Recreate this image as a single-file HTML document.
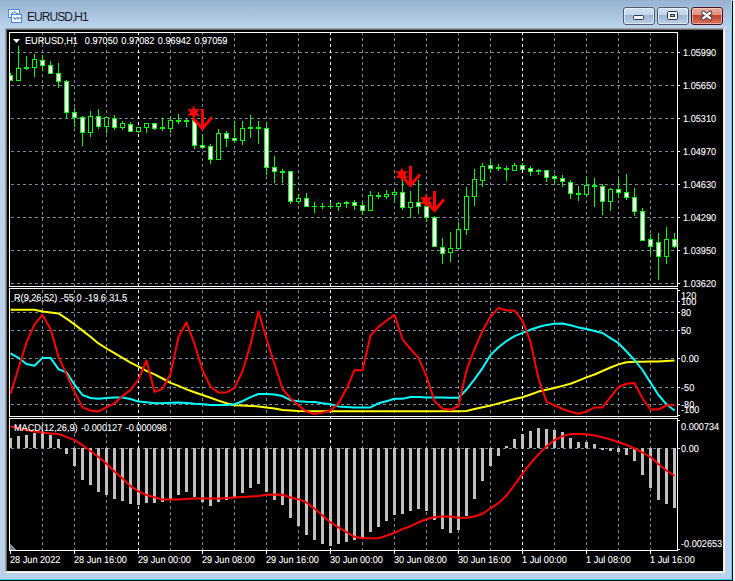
<!DOCTYPE html>
<html><head><meta charset="utf-8"><style>
html,body{margin:0;padding:0;}
body{width:735px;height:581px;overflow:hidden;position:relative;background:#b9d1ea;font-family:"Liberation Sans",sans-serif;}
.abs{position:absolute;}
.ch{position:absolute;left:0;top:0;}
.t{position:absolute;color:#fff;font-size:10px;line-height:10px;height:10px;margin-top:-3px;white-space:nowrap;word-spacing:1px;-webkit-text-stroke:0.1px #fff;transform:scale(0.915,1);transform-origin:0 8px;text-rendering:geometricPrecision;}
.ts{word-spacing:0;}
.title{position:absolute;left:27px;top:10px;font-size:12px;line-height:14px;color:#1a1a2a;letter-spacing:-0.95px;white-space:nowrap;}
</style></head><body>
<div class="abs" style="left:0;top:0;width:735px;height:28px;background:linear-gradient(#97b2d1,#bcd5ee);"></div>
<div class="abs" style="left:5px;top:28px;width:720px;height:545px;background:#ffffff;"></div>
<div class="abs" style="left:5px;top:28px;width:719px;height:544px;background:#a0a0a0;"></div>
<div class="abs" style="left:6px;top:29px;width:718px;height:543px;background:#e3e3e3;"></div>
<div class="abs" style="left:6px;top:29px;width:717px;height:542px;background:#696969;"></div>
<div class="abs" style="left:7px;top:30px;width:716px;height:541px;background:#000;"></div>
<div class="abs" style="left:730px;top:28px;width:1px;height:551px;background:#c4cce8;"></div>
<div class="abs" style="left:731px;top:0;width:1px;height:580px;background:linear-gradient(#a8e0f5,#48d8ff 30px,#48d8ff);"></div>
<div class="abs" style="left:732px;top:1px;width:1px;height:580px;background:#080808;"></div>
<div class="abs" style="left:733px;top:0;width:2px;height:581px;background:#f4f4f4;"></div>
<div class="abs" style="left:0;top:579px;width:732px;height:1px;background:#30d8f0;"></div>
<div class="abs" style="left:0;top:580px;width:733px;height:1px;background:#101010;"></div>
<svg class="ch" width="735" height="581" viewBox="0 0 735 581" shape-rendering="crispEdges"><defs>
<clipPath id="cg"><rect x="10" y="33" width="667" height="253"/><rect x="10" y="289" width="667" height="127"/><rect x="10" y="419" width="667" height="131"/>
<rect x="10" y="286" width="667" height="3"/><rect x="10" y="416" width="667" height="3"/></clipPath>
<clipPath id="cm"><rect x="10" y="33" width="667" height="253"/></clipPath>
<clipPath id="c1"><rect x="10" y="289" width="667" height="127"/></clipPath>
<clipPath id="c2"><rect x="10" y="419" width="667" height="131"/></clipPath>
</defs><g clip-path="url(#cg)"><line x1="11" y1="52.5" x2="677" y2="52.5" stroke="#778899" stroke-dasharray="3 3"/><line x1="11" y1="85.5" x2="677" y2="85.5" stroke="#778899" stroke-dasharray="3 3"/><line x1="11" y1="118.5" x2="677" y2="118.5" stroke="#778899" stroke-dasharray="3 3"/><line x1="11" y1="151.5" x2="677" y2="151.5" stroke="#778899" stroke-dasharray="3 3"/><line x1="11" y1="184.5" x2="677" y2="184.5" stroke="#778899" stroke-dasharray="3 3"/><line x1="11" y1="217.5" x2="677" y2="217.5" stroke="#778899" stroke-dasharray="3 3"/><line x1="11" y1="250.5" x2="677" y2="250.5" stroke="#778899" stroke-dasharray="3 3"/><line x1="11" y1="283.5" x2="677" y2="283.5" stroke="#778899" stroke-dasharray="3 3"/><line x1="11" y1="301.5" x2="677" y2="301.5" stroke="#778899" stroke-dasharray="3 3"/><line x1="11" y1="312.5" x2="677" y2="312.5" stroke="#778899" stroke-dasharray="3 3"/><line x1="11" y1="330.5" x2="677" y2="330.5" stroke="#778899" stroke-dasharray="3 3"/><line x1="11" y1="358.5" x2="677" y2="358.5" stroke="#778899" stroke-dasharray="3 3"/><line x1="11" y1="387.5" x2="677" y2="387.5" stroke="#778899" stroke-dasharray="3 3"/><line x1="11" y1="404.5" x2="677" y2="404.5" stroke="#778899" stroke-dasharray="3 3"/><line x1="11" y1="448.5" x2="677" y2="448.5" stroke="#778899" stroke-dasharray="3 3"/><line x1="42.5" y1="8" x2="42.5" y2="551" stroke="#778899" stroke-dasharray="3 3"/><line x1="74.5" y1="8" x2="74.5" y2="551" stroke="#778899" stroke-dasharray="3 3"/><line x1="106.5" y1="8" x2="106.5" y2="551" stroke="#778899" stroke-dasharray="3 3"/><line x1="138.5" y1="8" x2="138.5" y2="551" stroke="#ffffff" stroke-dasharray="3 3"/><line x1="170.5" y1="8" x2="170.5" y2="551" stroke="#778899" stroke-dasharray="3 3"/><line x1="202.5" y1="8" x2="202.5" y2="551" stroke="#778899" stroke-dasharray="3 3"/><line x1="234.5" y1="8" x2="234.5" y2="551" stroke="#778899" stroke-dasharray="3 3"/><line x1="266.5" y1="8" x2="266.5" y2="551" stroke="#778899" stroke-dasharray="3 3"/><line x1="298.5" y1="8" x2="298.5" y2="551" stroke="#778899" stroke-dasharray="3 3"/><line x1="330.5" y1="8" x2="330.5" y2="551" stroke="#ffffff" stroke-dasharray="3 3"/><line x1="362.5" y1="8" x2="362.5" y2="551" stroke="#778899" stroke-dasharray="3 3"/><line x1="394.5" y1="8" x2="394.5" y2="551" stroke="#778899" stroke-dasharray="3 3"/><line x1="426.5" y1="8" x2="426.5" y2="551" stroke="#778899" stroke-dasharray="3 3"/><line x1="458.5" y1="8" x2="458.5" y2="551" stroke="#778899" stroke-dasharray="3 3"/><line x1="490.5" y1="8" x2="490.5" y2="551" stroke="#778899" stroke-dasharray="3 3"/><line x1="522.5" y1="8" x2="522.5" y2="551" stroke="#ffffff" stroke-dasharray="3 3"/><line x1="554.5" y1="8" x2="554.5" y2="551" stroke="#778899" stroke-dasharray="3 3"/><line x1="586.5" y1="8" x2="586.5" y2="551" stroke="#778899" stroke-dasharray="3 3"/><line x1="618.5" y1="8" x2="618.5" y2="551" stroke="#778899" stroke-dasharray="3 3"/><line x1="650.5" y1="8" x2="650.5" y2="551" stroke="#778899" stroke-dasharray="3 3"/></g><g clip-path="url(#cm)"><rect x="10" y="73" width="1" height="8" fill="#00ff00"/><rect x="8" y="75" width="5" height="6" fill="#00ff00"/><rect x="9" y="76" width="3" height="4" fill="#ffffff"/><rect x="18" y="46" width="1" height="35" fill="#00ff00"/><rect x="16" y="68" width="5" height="13" fill="#00ff00"/><rect x="17" y="69" width="3" height="11" fill="#000000"/><rect x="26" y="56" width="1" height="14" fill="#00ff00"/><rect x="24" y="67" width="5" height="2" fill="#00ff00"/><rect x="34" y="54" width="1" height="23" fill="#00ff00"/><rect x="32" y="59" width="5" height="9" fill="#00ff00"/><rect x="33" y="60" width="3" height="7" fill="#000000"/><rect x="42" y="55" width="1" height="16" fill="#00ff00"/><rect x="40" y="60" width="5" height="6" fill="#00ff00"/><rect x="41" y="61" width="3" height="4" fill="#ffffff"/><rect x="50" y="61" width="1" height="13" fill="#00ff00"/><rect x="48" y="65" width="5" height="9" fill="#00ff00"/><rect x="49" y="66" width="3" height="7" fill="#ffffff"/><rect x="58" y="63" width="1" height="25" fill="#00ff00"/><rect x="56" y="73" width="5" height="9" fill="#00ff00"/><rect x="57" y="74" width="3" height="7" fill="#ffffff"/><rect x="66" y="80" width="1" height="39" fill="#00ff00"/><rect x="64" y="81" width="5" height="32" fill="#00ff00"/><rect x="65" y="82" width="3" height="30" fill="#ffffff"/><rect x="74" y="108" width="1" height="19" fill="#00ff00"/><rect x="72" y="112" width="5" height="6" fill="#00ff00"/><rect x="73" y="113" width="3" height="4" fill="#ffffff"/><rect x="82" y="116" width="1" height="30" fill="#00ff00"/><rect x="80" y="117" width="5" height="16" fill="#00ff00"/><rect x="81" y="118" width="3" height="14" fill="#ffffff"/><rect x="90" y="111" width="1" height="26" fill="#00ff00"/><rect x="88" y="116" width="5" height="17" fill="#00ff00"/><rect x="89" y="117" width="3" height="15" fill="#000000"/><rect x="98" y="109" width="1" height="20" fill="#00ff00"/><rect x="96" y="116" width="5" height="11" fill="#00ff00"/><rect x="97" y="117" width="3" height="9" fill="#ffffff"/><rect x="106" y="117" width="1" height="16" fill="#00ff00"/><rect x="104" y="117" width="5" height="10" fill="#00ff00"/><rect x="105" y="118" width="3" height="8" fill="#000000"/><rect x="114" y="115" width="1" height="15" fill="#00ff00"/><rect x="112" y="118" width="5" height="10" fill="#00ff00"/><rect x="113" y="119" width="3" height="8" fill="#ffffff"/><rect x="122" y="121" width="1" height="9" fill="#00ff00"/><rect x="120" y="123" width="5" height="5" fill="#00ff00"/><rect x="121" y="124" width="3" height="3" fill="#000000"/><rect x="130" y="122" width="1" height="10" fill="#00ff00"/><rect x="128" y="124" width="5" height="8" fill="#00ff00"/><rect x="129" y="125" width="3" height="6" fill="#ffffff"/><rect x="138" y="127" width="1" height="6" fill="#00ff00"/><rect x="136" y="127" width="5" height="5" fill="#00ff00"/><rect x="137" y="128" width="3" height="3" fill="#000000"/><rect x="146" y="123" width="1" height="10" fill="#00ff00"/><rect x="144" y="123" width="5" height="5" fill="#00ff00"/><rect x="145" y="124" width="3" height="3" fill="#000000"/><rect x="154" y="123" width="1" height="7" fill="#00ff00"/><rect x="152" y="123" width="5" height="6" fill="#00ff00"/><rect x="153" y="124" width="3" height="4" fill="#ffffff"/><rect x="162" y="118" width="1" height="13" fill="#00ff00"/><rect x="160" y="127" width="5" height="2" fill="#00ff00"/><rect x="170" y="116" width="1" height="17" fill="#00ff00"/><rect x="168" y="120" width="5" height="9" fill="#00ff00"/><rect x="169" y="121" width="3" height="7" fill="#000000"/><rect x="178" y="114" width="1" height="10" fill="#00ff00"/><rect x="176" y="120" width="5" height="2" fill="#00ff00"/><rect x="186" y="119" width="1" height="8" fill="#00ff00"/><rect x="184" y="120" width="5" height="2" fill="#00ff00"/><rect x="194" y="118" width="1" height="31" fill="#00ff00"/><rect x="192" y="120" width="5" height="26" fill="#00ff00"/><rect x="193" y="121" width="3" height="24" fill="#ffffff"/><rect x="202" y="134" width="1" height="15" fill="#00ff00"/><rect x="200" y="145" width="5" height="3" fill="#00ff00"/><rect x="201" y="146" width="3" height="1" fill="#ffffff"/><rect x="210" y="144" width="1" height="20" fill="#00ff00"/><rect x="208" y="146" width="5" height="14" fill="#00ff00"/><rect x="209" y="147" width="3" height="12" fill="#ffffff"/><rect x="218" y="129" width="1" height="31" fill="#00ff00"/><rect x="216" y="133" width="5" height="27" fill="#00ff00"/><rect x="217" y="134" width="3" height="25" fill="#000000"/><rect x="226" y="131" width="1" height="16" fill="#00ff00"/><rect x="224" y="133" width="5" height="6" fill="#00ff00"/><rect x="225" y="134" width="3" height="4" fill="#ffffff"/><rect x="234" y="121" width="1" height="22" fill="#00ff00"/><rect x="232" y="138" width="5" height="3" fill="#00ff00"/><rect x="233" y="139" width="3" height="1" fill="#ffffff"/><rect x="242" y="121" width="1" height="24" fill="#00ff00"/><rect x="240" y="128" width="5" height="13" fill="#00ff00"/><rect x="241" y="129" width="3" height="11" fill="#000000"/><rect x="250" y="115" width="1" height="23" fill="#00ff00"/><rect x="248" y="127" width="5" height="2" fill="#00ff00"/><rect x="258" y="121" width="1" height="23" fill="#00ff00"/><rect x="256" y="127" width="5" height="2" fill="#00ff00"/><rect x="266" y="122" width="1" height="53" fill="#00ff00"/><rect x="264" y="128" width="5" height="40" fill="#00ff00"/><rect x="265" y="129" width="3" height="38" fill="#ffffff"/><rect x="274" y="156" width="1" height="27" fill="#00ff00"/><rect x="272" y="167" width="5" height="5" fill="#00ff00"/><rect x="273" y="168" width="3" height="3" fill="#ffffff"/><rect x="282" y="169" width="1" height="14" fill="#00ff00"/><rect x="280" y="171" width="5" height="2" fill="#00ff00"/><rect x="290" y="171" width="1" height="33" fill="#00ff00"/><rect x="288" y="171" width="5" height="31" fill="#00ff00"/><rect x="289" y="172" width="3" height="29" fill="#ffffff"/><rect x="298" y="194" width="1" height="10" fill="#00ff00"/><rect x="296" y="198" width="5" height="4" fill="#00ff00"/><rect x="297" y="199" width="3" height="2" fill="#000000"/><rect x="306" y="193" width="1" height="14" fill="#00ff00"/><rect x="304" y="198" width="5" height="9" fill="#00ff00"/><rect x="305" y="199" width="3" height="7" fill="#ffffff"/><rect x="314" y="202" width="1" height="11" fill="#00ff00"/><rect x="312" y="206" width="5" height="1" fill="#00ff00"/><rect x="322" y="203" width="1" height="6" fill="#00ff00"/><rect x="320" y="206" width="5" height="1" fill="#00ff00"/><rect x="330" y="202" width="1" height="7" fill="#00ff00"/><rect x="328" y="206" width="5" height="1" fill="#00ff00"/><rect x="338" y="202" width="1" height="9" fill="#00ff00"/><rect x="336" y="203" width="5" height="4" fill="#00ff00"/><rect x="337" y="204" width="3" height="2" fill="#000000"/><rect x="346" y="201" width="1" height="7" fill="#00ff00"/><rect x="344" y="202" width="5" height="2" fill="#00ff00"/><rect x="354" y="200" width="1" height="10" fill="#00ff00"/><rect x="352" y="202" width="5" height="4" fill="#00ff00"/><rect x="353" y="203" width="3" height="2" fill="#ffffff"/><rect x="362" y="202" width="1" height="13" fill="#00ff00"/><rect x="360" y="205" width="5" height="6" fill="#00ff00"/><rect x="361" y="206" width="3" height="4" fill="#ffffff"/><rect x="370" y="191" width="1" height="20" fill="#00ff00"/><rect x="368" y="195" width="5" height="16" fill="#00ff00"/><rect x="369" y="196" width="3" height="14" fill="#000000"/><rect x="378" y="192" width="1" height="7" fill="#00ff00"/><rect x="376" y="195" width="5" height="2" fill="#00ff00"/><rect x="386" y="190" width="1" height="9" fill="#00ff00"/><rect x="384" y="194" width="5" height="3" fill="#00ff00"/><rect x="385" y="195" width="3" height="1" fill="#000000"/><rect x="394" y="190" width="1" height="12" fill="#00ff00"/><rect x="392" y="192" width="5" height="3" fill="#00ff00"/><rect x="393" y="193" width="3" height="1" fill="#000000"/><rect x="402" y="180" width="1" height="30" fill="#00ff00"/><rect x="400" y="192" width="5" height="16" fill="#00ff00"/><rect x="401" y="193" width="3" height="14" fill="#ffffff"/><rect x="410" y="191" width="1" height="27" fill="#00ff00"/><rect x="408" y="202" width="5" height="6" fill="#00ff00"/><rect x="409" y="203" width="3" height="4" fill="#000000"/><rect x="418" y="180" width="1" height="34" fill="#00ff00"/><rect x="416" y="202" width="5" height="5" fill="#00ff00"/><rect x="417" y="203" width="3" height="3" fill="#ffffff"/><rect x="426" y="194" width="1" height="28" fill="#00ff00"/><rect x="424" y="206" width="5" height="12" fill="#00ff00"/><rect x="425" y="207" width="3" height="10" fill="#ffffff"/><rect x="434" y="216" width="1" height="31" fill="#00ff00"/><rect x="432" y="217" width="5" height="30" fill="#00ff00"/><rect x="433" y="218" width="3" height="28" fill="#ffffff"/><rect x="442" y="238" width="1" height="26" fill="#00ff00"/><rect x="440" y="247" width="5" height="7" fill="#00ff00"/><rect x="441" y="248" width="3" height="5" fill="#ffffff"/><rect x="450" y="232" width="1" height="30" fill="#00ff00"/><rect x="448" y="248" width="5" height="5" fill="#00ff00"/><rect x="449" y="249" width="3" height="3" fill="#000000"/><rect x="458" y="222" width="1" height="27" fill="#00ff00"/><rect x="456" y="229" width="5" height="20" fill="#00ff00"/><rect x="457" y="230" width="3" height="18" fill="#000000"/><rect x="466" y="187" width="1" height="48" fill="#00ff00"/><rect x="464" y="196" width="5" height="34" fill="#00ff00"/><rect x="465" y="197" width="3" height="32" fill="#000000"/><rect x="474" y="169" width="1" height="37" fill="#00ff00"/><rect x="472" y="179" width="5" height="18" fill="#00ff00"/><rect x="473" y="180" width="3" height="16" fill="#000000"/><rect x="482" y="163" width="1" height="24" fill="#00ff00"/><rect x="480" y="166" width="5" height="15" fill="#00ff00"/><rect x="481" y="167" width="3" height="13" fill="#000000"/><rect x="490" y="159" width="1" height="14" fill="#00ff00"/><rect x="488" y="165" width="5" height="4" fill="#00ff00"/><rect x="489" y="166" width="3" height="2" fill="#ffffff"/><rect x="498" y="164" width="1" height="7" fill="#00ff00"/><rect x="496" y="167" width="5" height="2" fill="#00ff00"/><rect x="506" y="166" width="1" height="15" fill="#00ff00"/><rect x="504" y="168" width="5" height="2" fill="#00ff00"/><rect x="514" y="163" width="1" height="8" fill="#00ff00"/><rect x="512" y="165" width="5" height="6" fill="#00ff00"/><rect x="513" y="166" width="3" height="4" fill="#000000"/><rect x="522" y="163" width="1" height="7" fill="#00ff00"/><rect x="520" y="165" width="5" height="5" fill="#00ff00"/><rect x="521" y="166" width="3" height="3" fill="#ffffff"/><rect x="530" y="166" width="1" height="10" fill="#00ff00"/><rect x="528" y="168" width="5" height="4" fill="#00ff00"/><rect x="529" y="169" width="3" height="2" fill="#ffffff"/><rect x="538" y="169" width="1" height="6" fill="#00ff00"/><rect x="536" y="170" width="5" height="2" fill="#00ff00"/><rect x="546" y="170" width="1" height="12" fill="#00ff00"/><rect x="544" y="170" width="5" height="8" fill="#00ff00"/><rect x="545" y="171" width="3" height="6" fill="#ffffff"/><rect x="554" y="174" width="1" height="11" fill="#00ff00"/><rect x="552" y="176" width="5" height="3" fill="#00ff00"/><rect x="553" y="177" width="3" height="1" fill="#ffffff"/><rect x="562" y="175" width="1" height="12" fill="#00ff00"/><rect x="560" y="178" width="5" height="4" fill="#00ff00"/><rect x="561" y="179" width="3" height="2" fill="#ffffff"/><rect x="570" y="180" width="1" height="19" fill="#00ff00"/><rect x="568" y="182" width="5" height="12" fill="#00ff00"/><rect x="569" y="183" width="3" height="10" fill="#ffffff"/><rect x="578" y="186" width="1" height="15" fill="#00ff00"/><rect x="576" y="193" width="5" height="2" fill="#00ff00"/><rect x="586" y="177" width="1" height="20" fill="#00ff00"/><rect x="584" y="185" width="5" height="10" fill="#00ff00"/><rect x="585" y="186" width="3" height="8" fill="#000000"/><rect x="594" y="178" width="1" height="29" fill="#00ff00"/><rect x="592" y="185" width="5" height="2" fill="#00ff00"/><rect x="602" y="184" width="1" height="31" fill="#00ff00"/><rect x="600" y="186" width="5" height="16" fill="#00ff00"/><rect x="601" y="187" width="3" height="14" fill="#ffffff"/><rect x="610" y="188" width="1" height="23" fill="#00ff00"/><rect x="608" y="189" width="5" height="13" fill="#00ff00"/><rect x="609" y="190" width="3" height="11" fill="#000000"/><rect x="618" y="179" width="1" height="19" fill="#00ff00"/><rect x="616" y="189" width="5" height="4" fill="#00ff00"/><rect x="617" y="190" width="3" height="2" fill="#ffffff"/><rect x="626" y="174" width="1" height="26" fill="#00ff00"/><rect x="624" y="192" width="5" height="6" fill="#00ff00"/><rect x="625" y="193" width="3" height="4" fill="#ffffff"/><rect x="634" y="188" width="1" height="28" fill="#00ff00"/><rect x="632" y="197" width="5" height="15" fill="#00ff00"/><rect x="633" y="198" width="3" height="13" fill="#ffffff"/><rect x="642" y="208" width="1" height="33" fill="#00ff00"/><rect x="640" y="211" width="5" height="30" fill="#00ff00"/><rect x="641" y="212" width="3" height="28" fill="#ffffff"/><rect x="650" y="234" width="1" height="20" fill="#00ff00"/><rect x="648" y="239" width="5" height="8" fill="#00ff00"/><rect x="649" y="240" width="3" height="6" fill="#ffffff"/><rect x="658" y="233" width="1" height="47" fill="#00ff00"/><rect x="656" y="242" width="5" height="15" fill="#00ff00"/><rect x="657" y="243" width="3" height="13" fill="#ffffff"/><rect x="666" y="227" width="1" height="37" fill="#00ff00"/><rect x="664" y="239" width="5" height="18" fill="#00ff00"/><rect x="665" y="240" width="3" height="16" fill="#000000"/><rect x="674" y="233" width="1" height="15" fill="#00ff00"/><rect x="672" y="239" width="5" height="8" fill="#00ff00"/><rect x="673" y="240" width="3" height="6" fill="#ffffff"/></g><g clip-path="url(#cm)" shape-rendering="geometricPrecision"><polygon points="193.70,105.20 192.01,109.47 187.46,108.80 190.32,112.40 187.46,116.00 192.01,115.33 193.70,119.60 195.39,115.33 199.94,116.00 197.08,112.40 199.94,108.80 195.39,109.47" fill="#ff0000"/><rect x="201" y="109" width="3" height="20" fill="#ff0000"/><polyline points="194,119.5 202.5,128.5 211,118.5" fill="none" stroke="#ff0000" stroke-width="3" stroke-linecap="square" stroke-linejoin="miter"/><polygon points="401.80,167.30 400.11,171.57 395.56,170.90 398.42,174.50 395.56,178.10 400.11,177.43 401.80,181.70 403.49,177.43 408.04,178.10 405.18,174.50 408.04,170.90 403.49,171.57" fill="#ff0000"/><rect x="409" y="166" width="3" height="20" fill="#ff0000"/><polyline points="402,176.5 410.5,185.5 419,175.5" fill="none" stroke="#ff0000" stroke-width="3" stroke-linecap="square" stroke-linejoin="miter"/><polygon points="426.00,193.30 424.31,197.57 419.76,196.90 422.62,200.50 419.76,204.10 424.31,203.43 426.00,207.70 427.69,203.43 432.24,204.10 429.38,200.50 432.24,196.90 427.69,197.57" fill="#ff0000"/><rect x="433" y="191" width="3" height="20" fill="#ff0000"/><polyline points="426,201.5 434.5,210.5 443,200.5" fill="none" stroke="#ff0000" stroke-width="3" stroke-linecap="square" stroke-linejoin="miter"/></g><polyline clip-path="url(#c1)" points="10.5,309.7 18.5,309.7 26.5,309.7 34.5,309.7 42.5,311.4 50.5,312.4 58.5,313.4 66.5,318.6 74.5,324.4 82.5,330.6 90.5,336.8 98.5,343.4 106.5,348.5 114.5,353.2 122.5,357.8 130.5,362.6 138.5,366.7 146.5,370.8 154.5,374.3 162.5,378.5 170.5,382.9 178.5,385.9 186.5,389.4 194.5,392.3 202.5,395.0 210.5,397.7 218.5,400.6 226.5,403.3 234.5,405.3 242.5,405.5 250.5,405.9 258.5,406.4 266.5,407.4 274.5,408.5 282.5,409.9 290.5,410.5 298.5,411 306.5,411.2 314.5,411.2 322.5,411.2 330.5,411.2 338.5,411.2 346.5,411.2 354.5,411.2 362.5,411.2 370.5,411.2 378.5,411.2 386.5,411.2 394.5,411.2 402.5,411.2 410.5,411.2 418.5,411.2 426.5,411.2 434.5,411.2 442.5,411.2 450.5,411.2 458.5,411.2 466.5,411 474.5,409 482.5,407.2 490.5,405.6 498.5,403.4 506.5,401.2 514.5,399 522.5,397.2 530.5,394.5 538.5,391.6 546.5,389.8 554.5,388 562.5,385.9 570.5,383.7 578.5,380.6 586.5,377.4 594.5,374.5 602.5,371 610.5,367.5 618.5,364.4 626.5,362.3 634.5,361.7 642.5,361.7 650.5,361.6 658.5,361.4 666.5,361 674.5,360.6" fill="none" stroke="#ffff00" stroke-width="2" stroke-linejoin="round" shape-rendering="geometricPrecision"/><polyline clip-path="url(#c1)" points="10.5,353.3 18.5,357.9 26.5,364 34.5,365.7 42.5,357.9 50.5,357.9 58.5,369.2 66.5,372.3 74.5,384.7 82.5,395 90.5,398 98.5,398.7 106.5,398 114.5,397.4 122.5,397.4 130.5,399 138.5,401.6 146.5,402.2 154.5,403.3 162.5,403.3 170.5,402.8 178.5,402.5 186.5,402.9 194.5,403.7 202.5,404.3 210.5,405 218.5,405 226.5,405 234.5,404.3 242.5,401.2 250.5,397.1 258.5,394 266.5,394 274.5,394.6 282.5,396.1 290.5,400.2 298.5,401.2 306.5,401.7 314.5,402 322.5,403.3 330.5,404.3 338.5,406.4 346.5,407 354.5,407.4 362.5,407.4 370.5,407.4 378.5,403.3 386.5,401.2 394.5,398.8 402.5,398.8 410.5,397.1 418.5,397.1 426.5,397.5 434.5,397.5 442.5,397.5 450.5,397.8 458.5,397.8 466.5,389.5 474.5,379.3 482.5,368.2 490.5,355.1 498.5,347.3 506.5,341 514.5,336.1 522.5,332.9 530.5,329.7 538.5,327 546.5,324.9 554.5,323.7 562.5,323.6 570.5,325.2 578.5,327.4 586.5,329 594.5,331 602.5,333 610.5,338.2 618.5,343.2 626.5,351.5 634.5,360 642.5,370 650.5,382.6 658.5,395 666.5,404.3 674.5,410.5" fill="none" stroke="#00ffff" stroke-width="2" stroke-linejoin="round" shape-rendering="geometricPrecision"/><polyline clip-path="url(#c1)" points="10.5,394 18.5,368.2 26.5,342.4 34.5,324.4 42.5,314.9 50.5,328.9 58.5,356.8 66.5,374.4 74.5,392 82.5,407.4 90.5,410.5 98.5,411.4 106.5,407.4 114.5,403.3 122.5,396 130.5,389.9 138.5,379.5 146.5,360.5 154.5,391.9 162.5,388.8 170.5,374 178.5,337 186.5,322.3 194.5,344 202.5,370.2 210.5,386.8 218.5,392.6 226.5,392.6 234.5,387.8 242.5,371.3 250.5,344.4 258.5,311.4 266.5,339 274.5,364 282.5,388.8 290.5,398.5 298.5,405.5 306.5,411.5 314.5,414 322.5,412.6 330.5,410.5 338.5,403.3 346.5,388.8 354.5,370.2 362.5,370.2 370.5,335.5 378.5,326.9 386.5,320.7 394.5,314.9 402.5,339.3 410.5,349 418.5,357.9 426.5,376.4 434.5,401.2 442.5,408.5 450.5,410 458.5,406 466.5,370.2 474.5,349 482.5,331 490.5,316.5 498.5,307.9 506.5,310.5 514.5,310.5 522.5,320.7 530.5,342 538.5,378.5 546.5,401.7 554.5,405.4 562.5,409 570.5,411.8 578.5,413.8 586.5,411.6 594.5,407.4 602.5,407.4 610.5,397.1 618.5,386.8 626.5,383.7 634.5,383 642.5,398.5 650.5,409.5 658.5,409.5 666.5,405.4 674.5,405" fill="none" stroke="#ff0000" stroke-width="2" stroke-linejoin="round" shape-rendering="geometricPrecision"/><g clip-path="url(#c2)"><rect x="9" y="438" width="3" height="10" fill="#c0c0c0"/><rect x="17" y="436" width="3" height="12" fill="#c0c0c0"/><rect x="25" y="435" width="3" height="13" fill="#c0c0c0"/><rect x="33" y="433" width="3" height="15" fill="#c0c0c0"/><rect x="41" y="433" width="3" height="15" fill="#c0c0c0"/><rect x="49" y="435" width="3" height="13" fill="#c0c0c0"/><rect x="57" y="439" width="3" height="9" fill="#c0c0c0"/><rect x="65" y="448" width="3" height="6" fill="#c0c0c0"/><rect x="73" y="448" width="3" height="18" fill="#c0c0c0"/><rect x="81" y="448" width="3" height="32" fill="#c0c0c0"/><rect x="89" y="448" width="3" height="37" fill="#c0c0c0"/><rect x="97" y="448" width="3" height="44" fill="#c0c0c0"/><rect x="105" y="448" width="3" height="47" fill="#c0c0c0"/><rect x="113" y="448" width="3" height="51" fill="#c0c0c0"/><rect x="121" y="448" width="3" height="53" fill="#c0c0c0"/><rect x="129" y="448" width="3" height="56" fill="#c0c0c0"/><rect x="137" y="448" width="3" height="57" fill="#c0c0c0"/><rect x="145" y="448" width="3" height="55" fill="#c0c0c0"/><rect x="153" y="448" width="3" height="55" fill="#c0c0c0"/><rect x="161" y="448" width="3" height="54" fill="#c0c0c0"/><rect x="169" y="448" width="3" height="52" fill="#c0c0c0"/><rect x="177" y="448" width="3" height="47" fill="#c0c0c0"/><rect x="185" y="448" width="3" height="44" fill="#c0c0c0"/><rect x="193" y="448" width="3" height="49" fill="#c0c0c0"/><rect x="201" y="448" width="3" height="54" fill="#c0c0c0"/><rect x="209" y="448" width="3" height="58" fill="#c0c0c0"/><rect x="217" y="448" width="3" height="54" fill="#c0c0c0"/><rect x="225" y="448" width="3" height="52" fill="#c0c0c0"/><rect x="233" y="448" width="3" height="50" fill="#c0c0c0"/><rect x="241" y="448" width="3" height="45" fill="#c0c0c0"/><rect x="249" y="448" width="3" height="40" fill="#c0c0c0"/><rect x="257" y="448" width="3" height="36" fill="#c0c0c0"/><rect x="265" y="448" width="3" height="44" fill="#c0c0c0"/><rect x="273" y="448" width="3" height="52" fill="#c0c0c0"/><rect x="281" y="448" width="3" height="57" fill="#c0c0c0"/><rect x="289" y="448" width="3" height="70" fill="#c0c0c0"/><rect x="297" y="448" width="3" height="78" fill="#c0c0c0"/><rect x="305" y="448" width="3" height="87" fill="#c0c0c0"/><rect x="313" y="448" width="3" height="92" fill="#c0c0c0"/><rect x="321" y="448" width="3" height="96" fill="#c0c0c0"/><rect x="329" y="448" width="3" height="98" fill="#c0c0c0"/><rect x="337" y="448" width="3" height="96" fill="#c0c0c0"/><rect x="345" y="448" width="3" height="94" fill="#c0c0c0"/><rect x="353" y="448" width="3" height="92" fill="#c0c0c0"/><rect x="361" y="448" width="3" height="91" fill="#c0c0c0"/><rect x="369" y="448" width="3" height="84" fill="#c0c0c0"/><rect x="377" y="448" width="3" height="79" fill="#c0c0c0"/><rect x="385" y="448" width="3" height="73" fill="#c0c0c0"/><rect x="393" y="448" width="3" height="67" fill="#c0c0c0"/><rect x="401" y="448" width="3" height="66" fill="#c0c0c0"/><rect x="409" y="448" width="3" height="63" fill="#c0c0c0"/><rect x="417" y="448" width="3" height="61" fill="#c0c0c0"/><rect x="425" y="448" width="3" height="63" fill="#c0c0c0"/><rect x="433" y="448" width="3" height="72" fill="#c0c0c0"/><rect x="441" y="448" width="3" height="81" fill="#c0c0c0"/><rect x="449" y="448" width="3" height="85" fill="#c0c0c0"/><rect x="457" y="448" width="3" height="82" fill="#c0c0c0"/><rect x="465" y="448" width="3" height="68" fill="#c0c0c0"/><rect x="473" y="448" width="3" height="51" fill="#c0c0c0"/><rect x="481" y="448" width="3" height="33" fill="#c0c0c0"/><rect x="489" y="448" width="3" height="18" fill="#c0c0c0"/><rect x="497" y="448" width="3" height="8" fill="#c0c0c0"/><rect x="505" y="446" width="3" height="2" fill="#c0c0c0"/><rect x="513" y="439" width="3" height="9" fill="#c0c0c0"/><rect x="521" y="434" width="3" height="14" fill="#c0c0c0"/><rect x="529" y="431" width="3" height="17" fill="#c0c0c0"/><rect x="537" y="428" width="3" height="20" fill="#c0c0c0"/><rect x="545" y="429" width="3" height="19" fill="#c0c0c0"/><rect x="553" y="430" width="3" height="18" fill="#c0c0c0"/><rect x="561" y="432" width="3" height="16" fill="#c0c0c0"/><rect x="569" y="438" width="3" height="10" fill="#c0c0c0"/><rect x="577" y="442" width="3" height="6" fill="#c0c0c0"/><rect x="585" y="442" width="3" height="6" fill="#c0c0c0"/><rect x="593" y="444" width="3" height="4" fill="#c0c0c0"/><rect x="601" y="448" width="3" height="2" fill="#c0c0c0"/><rect x="609" y="448" width="3" height="3" fill="#c0c0c0"/><rect x="617" y="448" width="3" height="4" fill="#c0c0c0"/><rect x="625" y="448" width="3" height="7" fill="#c0c0c0"/><rect x="633" y="448" width="3" height="13" fill="#c0c0c0"/><rect x="641" y="448" width="3" height="27" fill="#c0c0c0"/><rect x="649" y="448" width="3" height="40" fill="#c0c0c0"/><rect x="657" y="448" width="3" height="52" fill="#c0c0c0"/><rect x="665" y="448" width="3" height="56" fill="#c0c0c0"/><rect x="673" y="448" width="3" height="60" fill="#c0c0c0"/></g><polyline clip-path="url(#c2)" points="10.5,426.2 18.5,428.3 26.5,429.9 34.5,431.4 42.5,432.4 50.5,433.4 58.5,434 66.5,436.9 74.5,440.2 82.5,445.2 90.5,451 98.5,457 106.5,463.5 114.5,471.5 122.5,478.5 130.5,486.1 138.5,491.3 146.5,495 154.5,497.3 162.5,499.5 170.5,499.5 178.5,499.5 186.5,498.9 194.5,498.5 202.5,498.5 210.5,498.5 218.5,498.5 226.5,498.1 234.5,497.5 242.5,496.9 250.5,496.4 258.5,496 266.5,494.8 274.5,494.4 282.5,494.8 290.5,497.5 298.5,499.2 306.5,502.5 314.5,508.7 322.5,515.5 330.5,522.4 338.5,527.3 346.5,532.1 354.5,536.8 362.5,538.3 370.5,538.3 378.5,538.3 386.5,535.8 394.5,532.8 402.5,529.1 410.5,526.2 418.5,522.3 426.5,519.2 434.5,517 442.5,516.6 450.5,516.6 458.5,517.7 466.5,517.7 474.5,516.5 482.5,513.8 490.5,508.3 498.5,503.1 506.5,495.5 514.5,485 522.5,473.6 530.5,463.3 538.5,454.4 546.5,446.3 554.5,440 562.5,436.2 570.5,434.1 578.5,434.1 586.5,434.2 594.5,435.5 602.5,437.2 610.5,439.5 618.5,442.3 626.5,444.8 634.5,448.5 642.5,452.5 650.5,457 658.5,464.3 666.5,470.5 674.5,476" fill="none" stroke="#ff0000" stroke-width="2" stroke-linejoin="round" shape-rendering="geometricPrecision"/><rect x="9" y="32" width="669" height="1" fill="#fff"/><rect x="9" y="286" width="669" height="1" fill="#fff"/><rect x="9" y="32" width="1" height="255" fill="#fff"/><rect x="677" y="32" width="1" height="255" fill="#fff"/><rect x="9" y="288" width="669" height="1" fill="#fff"/><rect x="9" y="416" width="669" height="1" fill="#fff"/><rect x="9" y="288" width="1" height="129" fill="#fff"/><rect x="677" y="288" width="1" height="129" fill="#fff"/><rect x="9" y="418" width="669" height="1" fill="#fff"/><rect x="9" y="550" width="669" height="1" fill="#fff"/><rect x="9" y="418" width="1" height="133" fill="#fff"/><rect x="677" y="418" width="1" height="133" fill="#fff"/><rect x="678" y="52" width="2" height="1" fill="#fff"/><rect x="678" y="85" width="2" height="1" fill="#fff"/><rect x="678" y="118" width="2" height="1" fill="#fff"/><rect x="678" y="151" width="2" height="1" fill="#fff"/><rect x="678" y="184" width="2" height="1" fill="#fff"/><rect x="678" y="217" width="2" height="1" fill="#fff"/><rect x="678" y="250" width="2" height="1" fill="#fff"/><rect x="678" y="283" width="2" height="1" fill="#fff"/><rect x="678" y="290" width="2" height="1" fill="#fff"/><rect x="678" y="301" width="2" height="1" fill="#fff"/><rect x="678" y="312" width="2" height="1" fill="#fff"/><rect x="678" y="330" width="2" height="1" fill="#fff"/><rect x="678" y="358" width="2" height="1" fill="#fff"/><rect x="678" y="387" width="2" height="1" fill="#fff"/><rect x="678" y="404" width="2" height="1" fill="#fff"/><rect x="678" y="415" width="2" height="1" fill="#fff"/><rect x="678" y="420" width="2" height="1" fill="#fff"/><rect x="678" y="448" width="2" height="1" fill="#fff"/><rect x="678" y="549" width="2" height="1" fill="#fff"/><rect x="10" y="551" width="1" height="3" fill="#fff"/><rect x="74" y="551" width="1" height="3" fill="#fff"/><rect x="138" y="551" width="1" height="3" fill="#fff"/><rect x="202" y="551" width="1" height="3" fill="#fff"/><rect x="266" y="551" width="1" height="3" fill="#fff"/><rect x="330" y="551" width="1" height="3" fill="#fff"/><rect x="394" y="551" width="1" height="3" fill="#fff"/><rect x="458" y="551" width="1" height="3" fill="#fff"/><rect x="522" y="551" width="1" height="3" fill="#fff"/><rect x="586" y="551" width="1" height="3" fill="#fff"/><rect x="650" y="551" width="1" height="3" fill="#fff"/><polygon points="10,544 10,550 16,550" fill="#778899"/><polygon points="13,39 20,39 16.5,43" fill="#fff" shape-rendering="geometricPrecision"/></svg>

<svg class="abs" style="left:0;top:0" width="735" height="28" viewBox="0 0 735 28">
<defs>
<linearGradient id="bg1" x1="0" y1="0" x2="0" y2="1">
<stop offset="0" stop-color="#d2e2f2"/><stop offset="0.45" stop-color="#c0d4e9"/><stop offset="0.46" stop-color="#9db7d2"/><stop offset="1" stop-color="#bcd2ea"/></linearGradient>
<linearGradient id="bg2" x1="0" y1="0" x2="0" y2="1">
<stop offset="0" stop-color="#f0c0b0"/><stop offset="0.12" stop-color="#e9a393"/><stop offset="0.45" stop-color="#e09282"/><stop offset="0.46" stop-color="#c0422a"/><stop offset="1" stop-color="#d8745c"/></linearGradient>
</defs>
<rect x="623.5" y="7.5" width="31" height="17" rx="2.5" fill="url(#bg1)" stroke="#4e5d72"/>
<rect x="624.5" y="8.5" width="29" height="15" rx="1.5" fill="none" stroke="#eef5fc" stroke-opacity="0.7"/>
<rect x="633.5" y="15.5" width="10" height="4" rx="1" fill="#f4f4f4" stroke="#303846"/>
<rect x="657.5" y="7.5" width="31" height="17" rx="2.5" fill="url(#bg1)" stroke="#4e5d72"/>
<rect x="658.5" y="8.5" width="29" height="15" rx="1.5" fill="none" stroke="#eef5fc" stroke-opacity="0.7"/>
<rect x="667.5" y="11.5" width="10" height="8" rx="1" fill="#f4f4f4" stroke="#303846"/>
<rect x="670.5" y="14.5" width="4" height="2" fill="#9fb4c8" stroke="#303846"/>
<rect x="691.5" y="7.5" width="31" height="17" rx="2.5" fill="url(#bg2)" stroke="#4a1020"/>
<rect x="692.5" y="8.5" width="29" height="15" rx="1.5" fill="none" stroke="#f6d8d0" stroke-opacity="0.6"/>
<path d="M703.3 12.8 L710.2 18.2 M710.2 12.8 L703.3 18.2" stroke="#2c3444" stroke-width="4.2" stroke-linecap="round"/>
<path d="M703.3 12.8 L710.2 18.2 M710.2 12.8 L703.3 18.2" stroke="#f8f8f8" stroke-width="2.4" stroke-linecap="round"/>
</svg>
<svg class="abs" style="left:0;top:0" width="28" height="28" viewBox="0 0 28 28" shape-rendering="crispEdges">
<rect x="8.5" y="9.5" width="11" height="8" fill="#ffffff" stroke="#4a86f4"/>
<rect x="8.5" y="9.5" width="11" height="8" fill="none" stroke="#3a8a70" stroke-dasharray="1 3" stroke-opacity="0.6"/>
<path d="M10.5 14.5 l1.5 -2 1.5 1 1.5 -2 1.5 2 1.5 0" fill="none" stroke="#3d7cf0" stroke-width="1" shape-rendering="geometricPrecision"/>
<rect x="11.5" y="14.5" width="10" height="8" fill="#ffffff" stroke="#4a86f4"/>
<rect x="11.5" y="14.5" width="10" height="8" fill="none" stroke="#3a8a70" stroke-dasharray="1 3" stroke-opacity="0.6"/>
<path d="M13.5 17 l1.5 2.5 1.5 -2.5 1.5 2.5 1.5 -2.5 1 2" fill="none" stroke="#3d7cf0" stroke-width="1" shape-rendering="geometricPrecision"/>
</svg>

<div class="t" style="left:683px;top:52px">1.05990</div><div class="t" style="left:683px;top:85px">1.05650</div><div class="t" style="left:683px;top:118px">1.05310</div><div class="t" style="left:683px;top:151px">1.04970</div><div class="t" style="left:683px;top:184px">1.04630</div><div class="t" style="left:683px;top:217px">1.04290</div><div class="t" style="left:683px;top:250px">1.03950</div><div class="t" style="left:683px;top:283px">1.03620</div><div class="t" style="left:681px;top:295px">120</div><div class="t" style="left:681px;top:301px">100</div><div class="t" style="left:681px;top:312px">80</div><div class="t" style="left:681px;top:330px">50</div><div class="t" style="left:681px;top:358px">0.00</div><div class="t" style="left:681px;top:387px">-50</div><div class="t" style="left:681px;top:404px">-80</div><div class="t" style="left:681px;top:409px">-100</div><div class="t" style="left:681px;top:426px">0.000734</div><div class="t" style="left:681px;top:448px">0.00</div><div class="t" style="left:681px;top:543px">-0.002653</div><div class="t ts" style="left:10px;top:559px">28 Jun 2022</div><div class="t ts" style="left:74px;top:559px">28 Jun 16:00</div><div class="t ts" style="left:138px;top:559px">29 Jun 00:00</div><div class="t ts" style="left:202px;top:559px">29 Jun 08:00</div><div class="t ts" style="left:266px;top:559px">29 Jun 16:00</div><div class="t ts" style="left:330px;top:559px">30 Jun 00:00</div><div class="t ts" style="left:394px;top:559px">30 Jun 08:00</div><div class="t ts" style="left:458px;top:559px">30 Jun 16:00</div><div class="t ts" style="left:522px;top:559px">1 Jul 00:00</div><div class="t ts" style="left:586px;top:559px">1 Jul 08:00</div><div class="t ts" style="left:650px;top:559px">1 Jul 16:00</div><div class="t" style="left:25px;top:40px">EURUSD,H1&nbsp;&nbsp;0.97050 0.97082 0.96942 0.97059</div><div class="t" style="left:14px;top:297px">R(9,26,52) -55.0 -19.6 31.5</div><div class="t" style="left:14px;top:427px">MACD(12,26,9) -0.000127 -0.000098</div>
<div class="title">EURUSD,H1</div>
</body></html>
